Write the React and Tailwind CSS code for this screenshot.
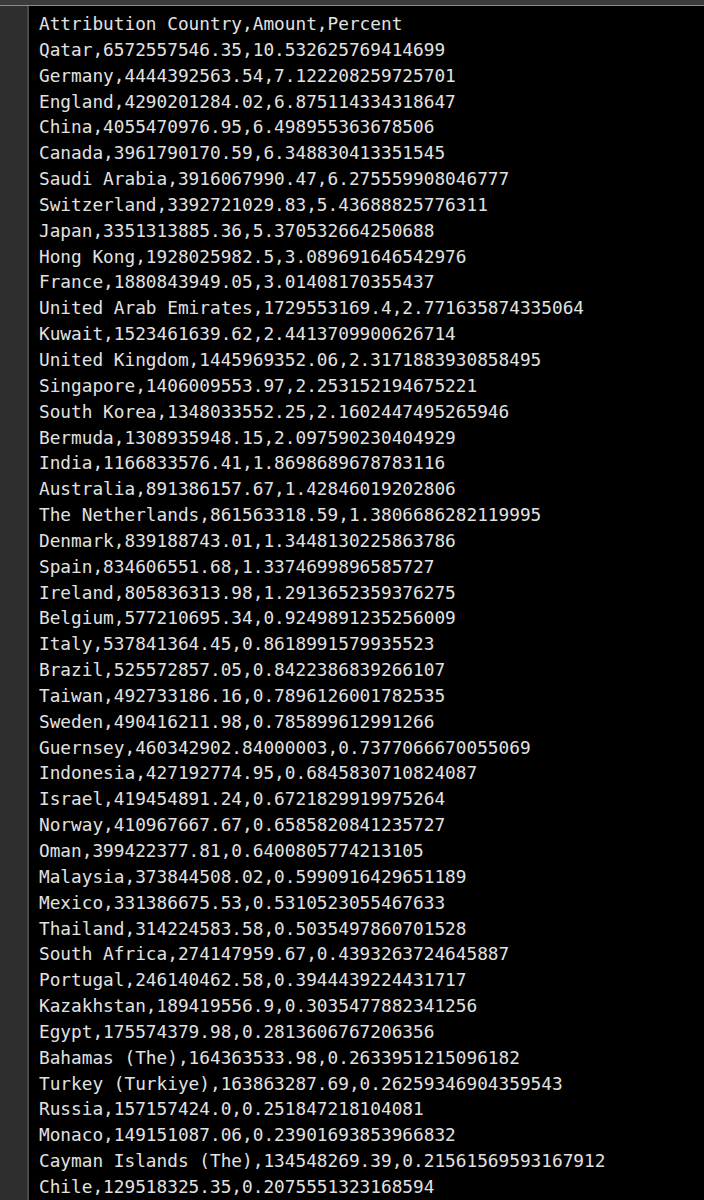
import React from 'react';

const LINES = [
  'Attribution Country,Amount,Percent',
  'Qatar,6572557546.35,10.532625769414699',
  'Germany,4444392563.54,7.122208259725701',
  'England,4290201284.02,6.875114334318647',
  'China,4055470976.95,6.498955363678506',
  'Canada,3961790170.59,6.348830413351545',
  'Saudi Arabia,3916067990.47,6.275559908046777',
  'Switzerland,3392721029.83,5.43688825776311',
  'Japan,3351313885.36,5.370532664250688',
  'Hong Kong,1928025982.5,3.089691646542976',
  'France,1880843949.05,3.01408170355437',
  'United Arab Emirates,1729553169.4,2.771635874335064',
  'Kuwait,1523461639.62,2.4413709900626714',
  'United Kingdom,1445969352.06,2.3171883930858495',
  'Singapore,1406009553.97,2.253152194675221',
  'South Korea,1348033552.25,2.1602447495265946',
  'Bermuda,1308935948.15,2.097590230404929',
  'India,1166833576.41,1.8698689678783116',
  'Australia,891386157.67,1.42846019202806',
  'The Netherlands,861563318.59,1.3806686282119995',
  'Denmark,839188743.01,1.3448130225863786',
  'Spain,834606551.68,1.3374699896585727',
  'Ireland,805836313.98,1.2913652359376275',
  'Belgium,577210695.34,0.9249891235256009',
  'Italy,537841364.45,0.8618991579935523',
  'Brazil,525572857.05,0.8422386839266107',
  'Taiwan,492733186.16,0.7896126001782535',
  'Sweden,490416211.98,0.785899612991266',
  'Guernsey,460342902.84000003,0.7377066670055069',
  'Indonesia,427192774.95,0.6845830710824087',
  'Israel,419454891.24,0.6721829919975264',
  'Norway,410967667.67,0.6585820841235727',
  'Oman,399422377.81,0.6400805774213105',
  'Malaysia,373844508.02,0.5990916429651189',
  'Mexico,331386675.53,0.5310523055467633',
  'Thailand,314224583.58,0.5035497860701528',
  'South Africa,274147959.67,0.4393263724645887',
  'Portugal,246140462.58,0.3944439224431717',
  'Kazakhstan,189419556.9,0.3035477882341256',
  'Egypt,175574379.98,0.2813606767206356',
  'Bahamas (The),164363533.98,0.2633951215096182',
  'Turkey (Turkiye),163863287.69,0.26259346904359543',
  'Russia,157157424.0,0.251847218104081',
  'Monaco,149151087.06,0.23901693853966832',
  'Cayman Islands (The),134548269.39,0.21561569593167912',
  'Chile,129518325.35,0.2075551323168594',
];

export default function App() {
  return (
    <div className="h-[1200px] w-[704px] overflow-hidden bg-black flex flex-col">
      <div className="h-[6px] bg-[#3b3b3b] border-b border-[#8a8a8a] shrink-0" />
      <div className="flex flex-1 min-h-0">
        <div className="w-[29px] shrink-0 bg-[#2e2e2e] border-r-2 border-[#4a4a4a]" />
        <div className="flex-1 pl-[10px] pt-[6px] font-['DejaVu_Sans_Mono','Liberation_Mono',monospace] text-[17.75px] leading-[25.85px] text-[#e2e2e2] whitespace-pre">
          {LINES.map((line, i) => (
            <div key={i}>{line}</div>
          ))}
        </div>
      </div>
    </div>
  );
}
